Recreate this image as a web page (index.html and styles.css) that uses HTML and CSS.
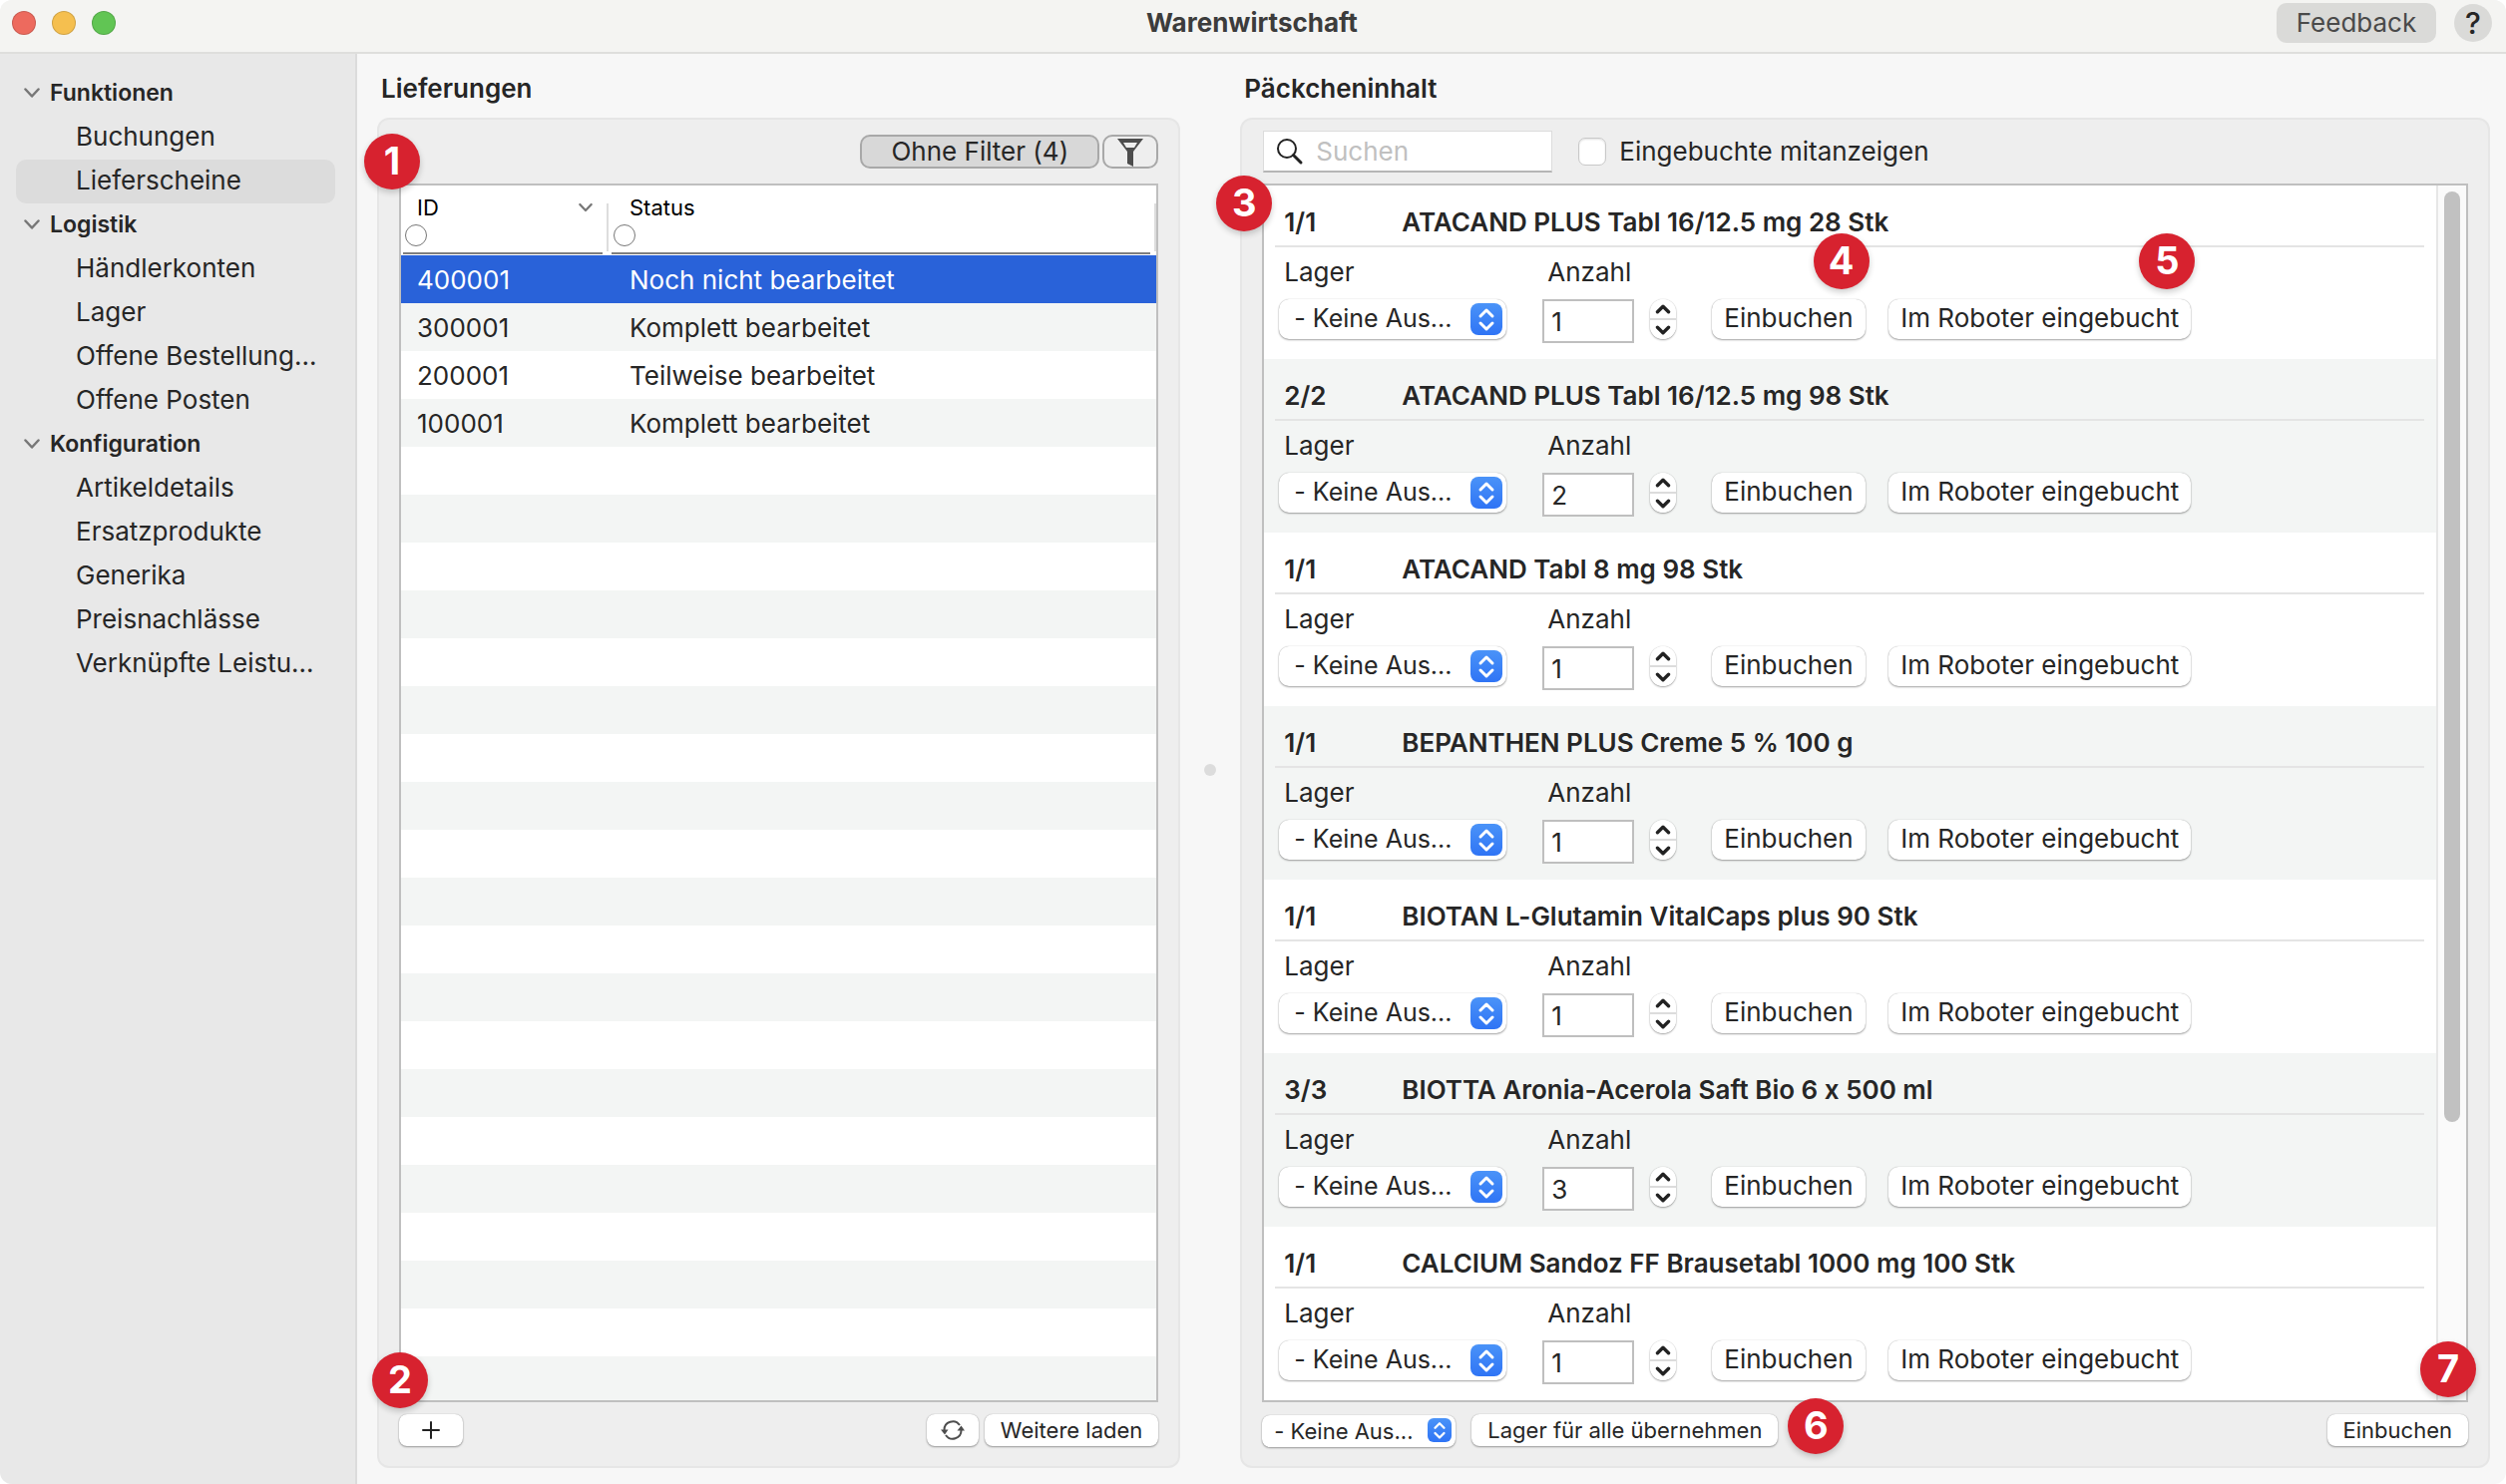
FILE: index.html
```html
<!DOCTYPE html>
<html lang="de">
<head>
    <meta charset="UTF-8">
    <meta name="viewport" content="width=device-width, initial-scale=1.0">
    <title>Warenwirtschaft</title>
    <link rel="stylesheet" href="styles.css">
</head>
<body>

    <!-- Icons -->
    <svg class="sprite" aria-hidden="true">
        <symbol id="chevron" viewBox="0 0 16 10"><path d="M1.5 1.5 8 8.5l6.500-7" fill="none" stroke="currentColor" stroke-width="2.500" stroke-linecap="round" stroke-linejoin="round"/></symbol>
        <symbol id="updown" viewBox="0 0 32 32"><path d="M10 13l6-6 6 6M10 20l6 6 6-6" fill="none" stroke="#fff" stroke-width="3" stroke-linecap="round" stroke-linejoin="round"/></symbol>
        <symbol id="up" viewBox="0 0 14 9"><path d="M2 7l5-5 5 5" fill="none" stroke="#222" stroke-width="3" stroke-linecap="round" stroke-linejoin="round"/></symbol>
        <symbol id="down" viewBox="0 0 14 9"><path d="M2 2l5 5 5-5" fill="none" stroke="#222" stroke-width="3" stroke-linecap="round" stroke-linejoin="round"/></symbol>
    </svg>

    <div class="window">
        <header class="titlebar">
            <div class="lights">
                <span class="light red"></span>
                <span class="light yellow"></span>
                <span class="light green"></span>
            </div>
            <h1>Warenwirtschaft</h1>
            <div class="titlebar-actions">
                <button class="feedback" type="button">Feedback</button>
                <button class="help" type="button">?</button>
            </div>
        </header>

        <div class="content">
            <nav class="sidebar">
                <h2><svg class="chevron"><use href="#chevron"/></svg>Funktionen</h2>
                <a href="#">Buchungen</a>
                <a href="#" class="active">Lieferscheine</a>
                <h2><svg class="chevron"><use href="#chevron"/></svg>Logistik</h2>
                <a href="#">Händlerkonten</a>
                <a href="#">Lager</a>
                <a href="#">Offene Bestellung...</a>
                <a href="#">Offene Posten</a>
                <h2><svg class="chevron"><use href="#chevron"/></svg>Konfiguration</h2>
                <a href="#">Artikeldetails</a>
                <a href="#">Ersatzprodukte</a>
                <a href="#">Generika</a>
                <a href="#">Preisnachlässe</a>
                <a href="#">Verknüpfte Leistu...</a>
            </nav>

            <main class="panes">
                <section class="pane">
                    <h2>Lieferungen</h2>
                    <div class="panel">
                        <div class="toolbar toolbar-right">
                            <button class="filter filter-text" type="button">Ohne Filter (4)</button>
                            <button class="filter filter-icon" type="button" aria-label="Filter">
                                <svg width="26" height="28" viewBox="0 0 26 28"><path fill="#4d4d4d" fill-rule="evenodd" d="M0 0h26L16 13v15l-6-3V13zM6 4l3 5h8l3-5z"/></svg>
                            </button>
                        </div>
                        <div class="box table-box">
                            <table>
                                <thead>
                                    <tr>
                                        <th class="col-id">
                                            <div class="head"><span>ID</span><svg class="sort"><use href="#chevron"/></svg></div>
                                            <label class="search-cell"><span class="ring"></span><input type="text" aria-label="ID filtern"></label>
                                        </th>
                                        <th>
                                            <div class="head"><span>Status</span></div>
                                            <label class="search-cell"><span class="ring"></span><input type="text" aria-label="Status filtern"></label>
                                        </th>
                                    </tr>
                                </thead>
                                <tbody>
                                    <tr class="selected"><td>400001</td><td>Noch nicht bearbeitet</td></tr>
                                    <tr><td>300001</td><td>Komplett bearbeitet</td></tr>
                                    <tr><td>200001</td><td>Teilweise bearbeitet</td></tr>
                                    <tr><td>100001</td><td>Komplett bearbeitet</td></tr>
                                </tbody>
                            </table>
                        </div>
                        <div class="footer">
                            <button class="btn small plus" type="button" aria-label="Hinzufügen">
                                <svg width="18" height="18" viewBox="0 0 18 18"><path d="M9 1v16M1 9h16" stroke="#222" stroke-width="2" stroke-linecap="round"/></svg>
                            </button>
                            <span class="spacer"></span>
                            <button class="btn small refresh" type="button" aria-label="Aktualisieren">
                                <svg width="24" height="20" viewBox="0 0 24 20"><path d="M19 5A8.500 8.500 0 0 0 3.500 10M5 15A8.500 8.500 0 0 0 20.500 10" fill="none" stroke="#4d4d4d" stroke-width="2"/><path d="M0 9.500h7.500L4 14.500zM16.500 10.500H24L20.500 5.500z" fill="#4d4d4d"/></svg>
                            </button>
                            <button class="btn small load" type="button">Weitere laden</button>
                        </div>
                        <span class="badge badge-1">1</span>
                        <span class="badge badge-2">2</span>
                    </div>
                </section>

                <div class="divider"><span></span></div>

                <section class="pane">
                    <h2>Päckcheninhalt</h2>
                    <div class="panel">
                        <div class="toolbar">
                            <label class="search">
                                <svg width="28" height="28" viewBox="0 0 28 28"><circle cx="11" cy="11" r="9" fill="none" stroke="#222" stroke-width="2"/><path d="M17.500 17.500 25 25" stroke="#222" stroke-width="3" stroke-linecap="round"/></svg>
                                <input type="text" placeholder="Suchen" aria-label="Suchen">
                            </label>
                            <label class="check"><input type="checkbox"> Eingebuchte mitanzeigen</label>
                        </div>
                        <div class="box list-box">
                            <div class="list">
                                <article class="item">
                                    <h3><span>1/1</span>ATACAND PLUS Tabl 16/12.5 mg 28 Stk</h3>
                                    <div class="fields">
                                        <label for="lager1">Lager</label>
                                        <label for="anzahl1">Anzahl</label>
                                        <span class="select"><select id="lager1"><option>- Keine Aus...</option></select><svg><use href="#updown"/></svg></span>
                                        <input class="count" id="anzahl1" type="text" value="1">
                                        <span class="stepper"><button type="button" aria-label="Mehr"><svg><use href="#up"/></svg></button><button type="button" aria-label="Weniger"><svg><use href="#down"/></svg></button></span>
                                        <span class="anchor"><button class="btn" type="button">Einbuchen</button><span class="badge badge-4">4</span></span>
                                        <span class="anchor"><button class="btn" type="button">Im Roboter eingebucht</button><span class="badge badge-5">5</span></span>
                                    </div>
                                </article>
                                <article class="item">
                                    <h3><span>2/2</span>ATACAND PLUS Tabl 16/12.5 mg 98 Stk</h3>
                                    <div class="fields">
                                        <label for="lager2">Lager</label>
                                        <label for="anzahl2">Anzahl</label>
                                        <span class="select"><select id="lager2"><option>- Keine Aus...</option></select><svg><use href="#updown"/></svg></span>
                                        <input class="count" id="anzahl2" type="text" value="2">
                                        <span class="stepper"><button type="button" aria-label="Mehr"><svg><use href="#up"/></svg></button><button type="button" aria-label="Weniger"><svg><use href="#down"/></svg></button></span>
                                        <button class="btn" type="button">Einbuchen</button>
                                        <button class="btn" type="button">Im Roboter eingebucht</button>
                                    </div>
                                </article>
                                <article class="item">
                                    <h3><span>1/1</span>ATACAND Tabl 8 mg 98 Stk</h3>
                                    <div class="fields">
                                        <label for="lager3">Lager</label>
                                        <label for="anzahl3">Anzahl</label>
                                        <span class="select"><select id="lager3"><option>- Keine Aus...</option></select><svg><use href="#updown"/></svg></span>
                                        <input class="count" id="anzahl3" type="text" value="1">
                                        <span class="stepper"><button type="button" aria-label="Mehr"><svg><use href="#up"/></svg></button><button type="button" aria-label="Weniger"><svg><use href="#down"/></svg></button></span>
                                        <button class="btn" type="button">Einbuchen</button>
                                        <button class="btn" type="button">Im Roboter eingebucht</button>
                                    </div>
                                </article>
                                <article class="item">
                                    <h3><span>1/1</span>BEPANTHEN PLUS Creme 5 % 100 g</h3>
                                    <div class="fields">
                                        <label for="lager4">Lager</label>
                                        <label for="anzahl4">Anzahl</label>
                                        <span class="select"><select id="lager4"><option>- Keine Aus...</option></select><svg><use href="#updown"/></svg></span>
                                        <input class="count" id="anzahl4" type="text" value="1">
                                        <span class="stepper"><button type="button" aria-label="Mehr"><svg><use href="#up"/></svg></button><button type="button" aria-label="Weniger"><svg><use href="#down"/></svg></button></span>
                                        <button class="btn" type="button">Einbuchen</button>
                                        <button class="btn" type="button">Im Roboter eingebucht</button>
                                    </div>
                                </article>
                                <article class="item">
                                    <h3><span>1/1</span>BIOTAN L-Glutamin VitalCaps plus 90 Stk</h3>
                                    <div class="fields">
                                        <label for="lager5">Lager</label>
                                        <label for="anzahl5">Anzahl</label>
                                        <span class="select"><select id="lager5"><option>- Keine Aus...</option></select><svg><use href="#updown"/></svg></span>
                                        <input class="count" id="anzahl5" type="text" value="1">
                                        <span class="stepper"><button type="button" aria-label="Mehr"><svg><use href="#up"/></svg></button><button type="button" aria-label="Weniger"><svg><use href="#down"/></svg></button></span>
                                        <button class="btn" type="button">Einbuchen</button>
                                        <button class="btn" type="button">Im Roboter eingebucht</button>
                                    </div>
                                </article>
                                <article class="item">
                                    <h3><span>3/3</span>BIOTTA Aronia-Acerola Saft Bio 6 x 500 ml</h3>
                                    <div class="fields">
                                        <label for="lager6">Lager</label>
                                        <label for="anzahl6">Anzahl</label>
                                        <span class="select"><select id="lager6"><option>- Keine Aus...</option></select><svg><use href="#updown"/></svg></span>
                                        <input class="count" id="anzahl6" type="text" value="3">
                                        <span class="stepper"><button type="button" aria-label="Mehr"><svg><use href="#up"/></svg></button><button type="button" aria-label="Weniger"><svg><use href="#down"/></svg></button></span>
                                        <button class="btn" type="button">Einbuchen</button>
                                        <button class="btn" type="button">Im Roboter eingebucht</button>
                                    </div>
                                </article>
                                <article class="item">
                                    <h3><span>1/1</span>CALCIUM Sandoz FF Brausetabl 1000 mg 100 Stk</h3>
                                    <div class="fields">
                                        <label for="lager7">Lager</label>
                                        <label for="anzahl7">Anzahl</label>
                                        <span class="select"><select id="lager7"><option>- Keine Aus...</option></select><svg><use href="#updown"/></svg></span>
                                        <input class="count" id="anzahl7" type="text" value="1">
                                        <span class="stepper"><button type="button" aria-label="Mehr"><svg><use href="#up"/></svg></button><button type="button" aria-label="Weniger"><svg><use href="#down"/></svg></button></span>
                                        <button class="btn" type="button">Einbuchen</button>
                                        <button class="btn" type="button">Im Roboter eingebucht</button>
                                    </div>
                                </article>
                            </div>
                            <div class="scrollbar"><span></span></div>
                        </div>
                        <div class="footer">
                            <span class="select small"><select aria-label="Lager für alle"><option>- Keine Aus...</option></select><svg><use href="#updown"/></svg></span>
                            <span class="anchor all"><button class="btn small" type="button">Lager für alle übernehmen</button><span class="badge badge-6">6</span></span>
                            <span class="spacer"></span>
                            <button class="btn small" type="button">Einbuchen</button>
                        </div>
                        <span class="badge badge-3">3</span>
                        <span class="badge badge-7">7</span>
                    </div>
                </section>
            </main>
        </div>
    </div>

</body>
</html>
```

FILE: styles.css
```css
* {
    box-sizing: border-box;
}

body {
    margin: 0;
    background-color: #fff;
    color: #262626;
    font-family: Inter, "Liberation Sans", sans-serif;
    font-size: 26px;
    font-variant-ligatures: no-contextual;
    line-height: 32px;
}

h1, h2, h3 {
    margin: 0;
    font-size: 26px;
    font-weight: 600;
}

button, input, select {
    margin: 0;
    padding: 0;
    border: none;
    color: inherit;
    font: inherit;
}

svg {
    display: block;
    flex: none;
}

.sprite {
    display: none;
}

.window {
    display: flex;
    flex-direction: column;
    min-height: 100vh;
    overflow: hidden;
    border-radius: 12px;
    background-color: #f7f7f7;
}

/* Title bar */
.titlebar {
    display: grid;
    grid-template-columns: 1fr auto 1fr;
    align-items: center;
    height: 54px;
    padding: 0 14px 6px 12px;
    border-bottom: 2px solid #dededc;
    background-color: #f4f4f2;
}

.titlebar h1 {
    color: #3c3c3c;
    font-weight: 700;
}

.lights {
    display: flex;
    gap: 16px;
}

.light {
    width: 24px;
    height: 24px;
    border: 1px solid rgba(0, 0, 0, 0.15);
    border-radius: 50%;
}

.red {
    background-color: #ed6a5e;
}

.yellow {
    background-color: #f5bf4f;
}

.green {
    background-color: #61c554;
}

.titlebar-actions {
    display: flex;
    align-items: center;
    justify-content: flex-end;
    gap: 18px;
}

.feedback {
    width: 160px;
    height: 40px;
    border-radius: 10px;
    background-color: #dadad8;
    color: #4a4a4a;
}

.help {
    width: 38px;
    height: 38px;
    border-radius: 50%;
    background-color: #dadad8;
    font-size: 30px;
    font-weight: 500;
}

.content {
    display: flex;
    flex: 1;
}

/* Navigation */
.sidebar {
    flex: none;
    width: 358px;
    padding: 18px 20px 0 16px;
    border-right: 2px solid #dcdcdc;
    background-color: #e8e8e8;
}

.sidebar h2 {
    display: flex;
    align-items: center;
    gap: 10px;
    height: 44px;
    padding: 0 0 2px 8px;
    font-size: 23px;
}

.sidebar a {
    display: block;
    padding: 5px 0 7px 60px;
    border-radius: 10px;
    color: inherit;
    text-decoration: none;
    white-space: nowrap;
}

.sidebar .active {
    background-color: #dcdcdc;
}

.chevron {
    width: 16px;
    height: 10px;
    color: #777;
}

/* Two panes */
.panes {
    display: grid;
    grid-template-columns: 9fr 60px 14fr;
    flex: 1;
    padding: 18px 16px 16px 20px;
}

.pane {
    display: flex;
    flex-direction: column;
    min-width: 0;
}

.pane h2 {
    padding: 1px 4px 13px;
}

.panel {
    position: relative;
    display: flex;
    flex: 1;
    flex-direction: column;
    padding: 12px 20px 20px;
    border: 2px solid #e6e6e6;
    border-radius: 12px;
    background-color: #eee;
}

.divider {
    display: flex;
    align-items: center;
    justify-content: center;
}

.divider span {
    width: 12px;
    height: 12px;
    border-radius: 50%;
    background-color: #dcdcdc;
}

.toolbar {
    display: flex;
    align-items: center;
    gap: 26px;
    height: 40px;
    margin-bottom: 12px;
}

.toolbar-right {
    justify-content: flex-end;
    gap: 3px;
}

.filter {
    height: 34px;
    border: 2px solid #a8a8a8;
    border-radius: 10px;
}

.filter-text {
    width: 240px;
    background-color: #d8d8d8;
    line-height: 28px;
}

.filter-icon {
    display: flex;
    justify-content: center;
    width: 56px;
    padding-top: 2px;
    background-color: #eee;
}

.box {
    flex: 1;
    border: 2px solid #bfbfbf;
    background-color: #fff;
}

.footer {
    display: flex;
    align-items: center;
    height: 32px;
    margin-top: 12px;
}

.spacer {
    flex: 1;
}

/* Deliveries */
.table-box {
    padding-top: 70px;
    background: repeating-linear-gradient(#fff 0 48px, #f3f5f4 48px 96px) content-box, #fff;
}

table {
    width: 100%;
    margin-top: -70px;
    border-collapse: collapse;
    table-layout: fixed;
}

th {
    height: 70px;
    padding: 6px 6px 0 2px;
    background: linear-gradient(#ddd, #ddd) right 18px / 2px 48px no-repeat #fff;
    color: #000;
    font-size: 22px;
    font-weight: 400;
    text-align: left;
    vertical-align: top;
}

th + th {
    padding-left: 3px;
}

.col-id {
    width: 208px;
}

.head {
    display: flex;
    align-items: center;
    justify-content: space-between;
    height: 32px;
    padding: 0 10px 0 14px;
}

th + th .head {
    padding-left: 18px;
}

.sort {
    width: 14px;
    height: 10px;
    color: #777;
}

.search-cell {
    display: flex;
    align-items: center;
    height: 31px;
    border-bottom: 2px solid #7f7f7f;
}

.ring {
    flex: none;
    width: 22px;
    height: 22px;
    margin: 0 4px 6px 2px;
    border: 1px solid #777;
    border-radius: 50%;
}

.search-cell input {
    width: 100%;
    min-width: 0;
    height: 24px;
    outline: none;
    background: none;
}

td {
    height: 48px;
    padding: 2px 0 0 16px;
}

td + td {
    padding-left: 21px;
}

.selected {
    background-color: #2962d9;
    color: #fff;
}

/* Search bar */
.search {
    display: flex;
    align-items: center;
    gap: 12px;
    width: 290px;
    height: 42px;
    margin-left: 1px;
    padding: 0 12px;
    border: 1px solid #dcdcdc;
    border-bottom: 2px solid #b5b5b5;
    background-color: #fff;
}

.search input {
    width: 100%;
    min-width: 0;
    outline: none;
    background: none;
}

.search input::placeholder {
    color: #c0c0c0;
}

.check {
    display: flex;
    align-items: center;
    gap: 13px;
}

.check input {
    width: 28px;
    height: 28px;
    border: 1px solid #c9c9c9;
    border-radius: 7px;
    background-color: #fff;
    box-shadow: inset 0 1px 2px rgba(0, 0, 0, 0.12);
    appearance: none;
}

/* Package contents */
.list-box {
    display: flex;
}

.list {
    flex: 1;
}

.item {
    height: 174px;
    padding: 0 12px 0 11px;
}

.item:nth-child(even) {
    background-color: #f3f5f4;
}

.item h3 {
    display: flex;
    height: 62px;
    padding: 21px 9px 0;
    border-bottom: 2px solid #e4e4e4;
}

.item h3 span {
    width: 118px;
}

.fields {
    display: grid;
    grid-template-columns: 248px 92px 46px 161px 305px;
    column-gap: 16px;
    justify-items: start;
    padding: 9px 4px 0;
}

.fields label {
    grid-column: 1;
    height: 43px;
    padding-left: 5px;
}

.fields label + label {
    grid-column: 2 / -1;
}

.btn, .select select {
    height: 40px;
    border-radius: 10px;
    background-color: #fff;
    box-shadow: 0 1px 2px rgba(0, 0, 0, 0.35), 0 0 1px rgba(0, 0, 0, 0.3);
    white-space: nowrap;
}

.btn {
    padding: 0 12px 2px;
}

.anchor {
    position: relative;
    display: block;
}

.anchor .btn {
    display: block;
}

.select {
    position: relative;
    display: block;
    width: 228px;
    height: 40px;
}

.select select {
    width: 100%;
    padding: 0 0 2px 15px;
    font-size: 25px;
    appearance: none;
}

.select svg {
    position: absolute;
    top: 4px;
    right: 4px;
    width: 32px;
    height: 32px;
    border-radius: 8px;
    background: linear-gradient(#4a93f8, #2f74f5);
    pointer-events: none;
}

.count {
    width: 92px;
    height: 44px;
    padding-left: 7px;
    border: 2px solid #bfbfbf;
    background-color: #fff;
}

.stepper {
    display: flex;
    flex-direction: column;
    width: 26px;
    height: 40px;
    overflow: hidden;
    border-radius: 13px;
    box-shadow: 0 1px 2px rgba(0, 0, 0, 0.35), 0 0 1px rgba(0, 0, 0, 0.3);
}

.stepper button {
    display: flex;
    flex: 1;
    align-items: center;
    justify-content: center;
    background-color: #fff;
}

.stepper button + button {
    border-top: 2px solid #dcdcdc;
}

.stepper svg {
    width: 16px;
    height: 10px;
}

.scrollbar {
    width: 30px;
    padding: 6px 0 0 6px;
    border-left: 2px solid #e6e6e6;
    background-color: #fafafa;
}

.scrollbar span {
    display: block;
    width: 16px;
    height: 77%;
    border-radius: 8px;
    background-color: #c1c1c1;
}

/* Small controls below the boxes */
.btn.small, .select.small select {
    height: 32px;
    padding: 0 16px;
    border-radius: 8px;
    font-size: 22px;
    line-height: 30px;
}

.select.small {
    width: 194px;
    height: 32px;
}

.select.small select {
    padding: 0 0 0 12px;
}

.select.small svg {
    width: 24px;
    height: 24px;
    border-radius: 6px;
}

.btn.plus, .btn.refresh {
    display: flex;
    align-items: center;
    justify-content: center;
    width: 64px;
    padding: 0;
}

.btn.refresh {
    width: 52px;
    margin-right: 6px;
}

.all {
    margin-left: 16px;
}

/* Numbered markers */
.badge {
    position: absolute;
    width: 56px;
    height: 56px;
    border-radius: 50%;
    background-color: #d7222f;
    box-shadow: 0 3px 6px rgba(0, 0, 0, 0.2);
    color: #fff;
    font-size: 38px;
    font-weight: 700;
    line-height: 54px;
    text-align: center;
}

.badge-1 {
    top: 14px;
    left: -15px;
}

.badge-2 {
    bottom: 58px;
    left: -7px;
}

.badge-3 {
    top: 56px;
    left: -26px;
}

.badge-4, .badge-5 {
    top: -66px;
    right: -4px;
}

.badge-6 {
    top: -16px;
    right: -66px;
}

.badge-7 {
    right: 12px;
    bottom: 69px;
}
```
